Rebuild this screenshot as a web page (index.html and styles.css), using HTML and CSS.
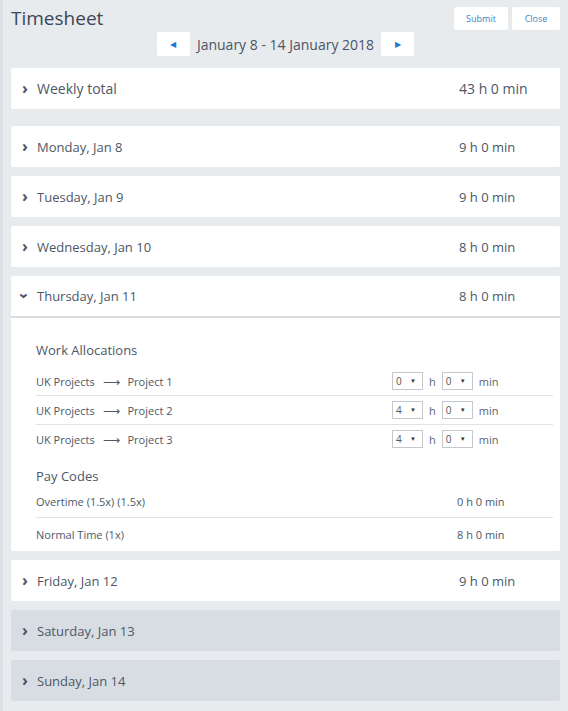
FILE: index.html
```html
<!DOCTYPE html>
<html lang="en">
<head>
    <meta charset="UTF-8">
    <title>Timesheet</title>
    <link rel="stylesheet" href="styles.css">
</head>
<body>
<div class="page">
    <div class="header">
        <h1 class="title">Timesheet</h1>
        <div class="actions">
            <button class="btn">Submit</button>
            <button class="btn">Close</button>
        </div>
    </div>
    <div class="week-nav">
        <button class="nav-btn">&#9664;</button>
        <span class="week-range">January 8 - 14 January 2018</span>
        <button class="nav-btn">&#9654;</button>
    </div>

    <div class="card total">
        <div class="card-head">
            <span class="chev">&#8250;</span>
            <span class="label">Weekly total</span>
            <span class="hours">43 h 0 min</span>
        </div>
    </div>

    <div class="days">
        <div class="card">
            <div class="card-head">
                <span class="chev">&#8250;</span>
                <span class="label">Monday, Jan 8</span>
                <span class="hours">9 h 0 min</span>
            </div>
        </div>
        <div class="card">
            <div class="card-head">
                <span class="chev">&#8250;</span>
                <span class="label">Tuesday, Jan 9</span>
                <span class="hours">9 h 0 min</span>
            </div>
        </div>
        <div class="card">
            <div class="card-head">
                <span class="chev">&#8250;</span>
                <span class="label">Wednesday, Jan 10</span>
                <span class="hours">8 h 0 min</span>
            </div>
        </div>
        <div class="card open">
            <div class="card-head">
                <span class="chev down">&#8250;</span>
                <span class="label">Thursday, Jan 11</span>
                <span class="hours">8 h 0 min</span>
            </div>
            <div class="card-body">
                <h3 class="section">Work Allocations</h3>
                <div class="alloc">
                    <div class="row">
                        <span class="task">UK Projects <span class="arrow">&#10230;</span> Project 1</span>
                        <span class="time">
                            <span class="select">0<i>&#9660;</i></span> h
                            <span class="select">0<i>&#9660;</i></span> min
                        </span>
                    </div>
                    <div class="row">
                        <span class="task">UK Projects <span class="arrow">&#10230;</span> Project 2</span>
                        <span class="time">
                            <span class="select">4<i>&#9660;</i></span> h
                            <span class="select">0<i>&#9660;</i></span> min
                        </span>
                    </div>
                    <div class="row">
                        <span class="task">UK Projects <span class="arrow">&#10230;</span> Project 3</span>
                        <span class="time">
                            <span class="select">4<i>&#9660;</i></span> h
                            <span class="select">0<i>&#9660;</i></span> min
                        </span>
                    </div>
                </div>
                <h3 class="section pay">Pay Codes</h3>
                <div class="codes">
                    <div class="row code">
                        <span class="task">Overtime (1.5x) (1.5x)</span>
                        <span class="amount">0 h 0 min</span>
                    </div>
                    <div class="row code">
                        <span class="task">Normal Time (1x)</span>
                        <span class="amount">8 h 0 min</span>
                    </div>
                </div>
            </div>
        </div>
        <div class="card">
            <div class="card-head">
                <span class="chev">&#8250;</span>
                <span class="label">Friday, Jan 12</span>
                <span class="hours">9 h 0 min</span>
            </div>
        </div>
        <div class="card off">
            <div class="card-head">
                <span class="chev">&#8250;</span>
                <span class="label">Saturday, Jan 13</span>
            </div>
        </div>
        <div class="card off">
            <div class="card-head">
                <span class="chev">&#8250;</span>
                <span class="label">Sunday, Jan 14</span>
            </div>
        </div>
    </div>
</div>
</body>
</html>
```

FILE: styles.css
```css
body {
    margin: 0;
    background: #e8ebee;
    border-left: 3px solid #dce0e5;
    font-family: "Open Sans", "Liberation Sans", sans-serif;
    color: #4d5766;
}

.page {
    padding: 6px 8px 10px 8px;
}

.header {
    display: flex;
    justify-content: space-between;
    align-items: flex-start;
}

.title {
    margin: 0;
    font-size: 19px;
    font-weight: normal;
    color: #3b4656;
    line-height: 24px;
}

.actions {
    display: flex;
    gap: 4px;
    padding-top: 1px;
}

.btn {
    background: #fff;
    border: none;
    border-radius: 2px;
    height: 23px;
    font-family: inherit;
    font-size: 9px;
    color: #3d7fc1;
    padding: 0 11px;
    box-shadow: 0 0 1px rgba(0, 0, 0, .06);
}

.btn:first-child {
    width: 54px;
}

.btn:last-child {
    width: 48px;
}

.week-nav {
    display: flex;
    justify-content: center;
    align-items: center;
    gap: 7px;
    margin-top: 2px;
}

.nav-btn {
    width: 33px;
    height: 24px;
    background: #fff;
    border: none;
    border-radius: 2px;
    color: #2278d2;
    font-size: 8px;
    padding: 0;
}

.week-range {
    font-size: 14px;
    color: #4a5566;
}

.card {
    background: #fff;
    border-radius: 2px;
}

.total {
    margin-top: 12px;
}

.total .card-head {
    font-size: 14px;
}

.days {
    display: flex;
    flex-direction: column;
    gap: 9px;
    margin-top: 17px;
}

.card-head {
    display: flex;
    align-items: center;
    height: 41px;
    padding-left: 11px;
    font-size: 13px;
}

.chev {
    width: 15px;
    font-size: 16px;
    font-weight: bold;
    color: #4a5468;
    line-height: 1;
    margin-top: -2px;
}

.chev.down {
    display: inline-block;
    transform: rotate(90deg);
    width: 6px;
    margin-right: 9px;
    margin-top: 0;
    text-align: center;
}

.label {
    flex: 1;
}

.hours {
    width: 101px;
}

.open .card-head {
    height: 40px;
    border-bottom: 2px solid #d9dde2;
}

.card-body {
    padding: 23px 7px 1px 25px;
    font-size: 11px;
}

.section {
    margin: 0 0 8px 0;
    font-size: 13px;
    line-height: 18px;
    font-weight: normal;
    color: #4d5766;
}

.section.pay {
    margin-top: 14px;
    margin-bottom: 0;
}

.row {
    display: flex;
    justify-content: space-between;
    align-items: center;
    height: 28px;
    border-bottom: 1px solid #dfe2e6;
}

.row:last-child {
    border-bottom: none;
}

.task {
    color: #4d5766;
}

.arrow {
    margin: 0 5px;
    font-size: 12px;
}

.time {
    display: flex;
    align-items: center;
    gap: 6px;
    width: 161px;
    color: #5a6472;
}

.select {
    display: inline-flex;
    justify-content: space-between;
    align-items: center;
    box-sizing: border-box;
    width: 31px;
    height: 18px;
    border: 1px solid #c5c9ce;
    padding: 0 6px 0 3px;
    font-size: 10px;
    color: #555;
}

.select i {
    font-style: normal;
    font-size: 6px;
    color: #333;
}

.code {
    height: 32px;
}

.amount {
    width: 96px;
    font-size: 11px;
}

.off {
    background: #d8dde3;
}
```
